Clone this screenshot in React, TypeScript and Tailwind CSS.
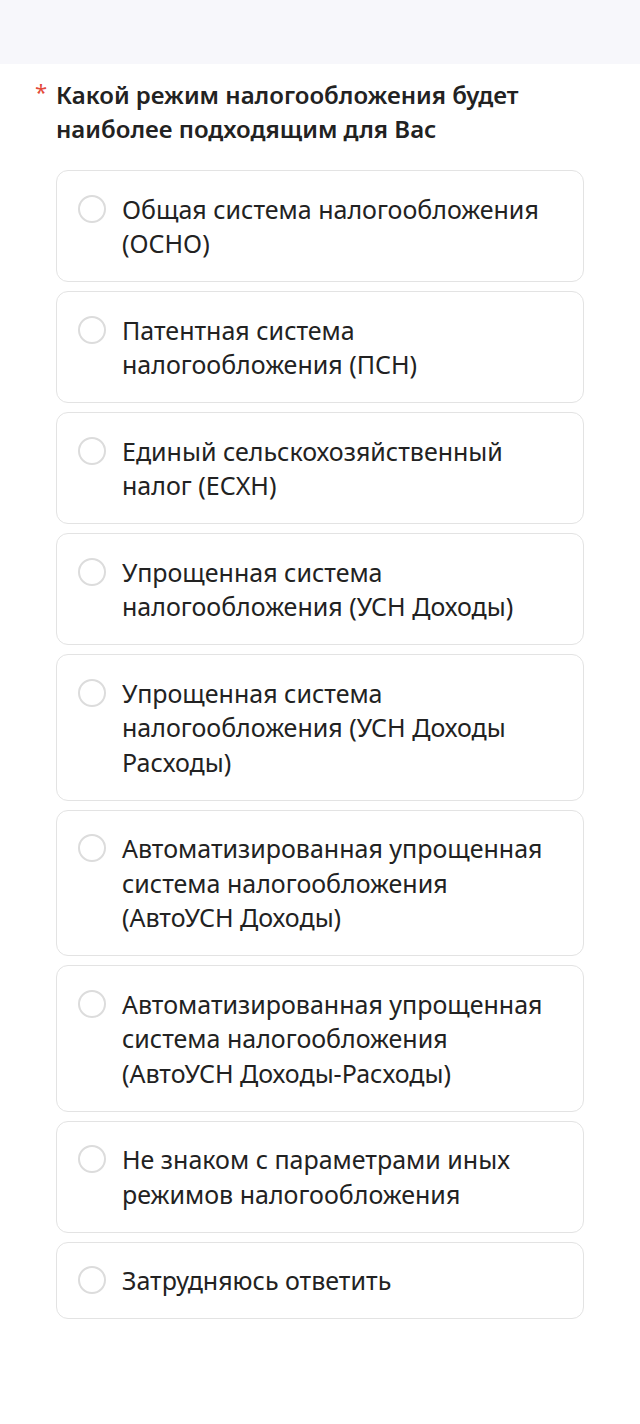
import React from 'react';

// each option is split the same way as in the form
const options: string[][] = [
  ['Общая система налогообложения', '(ОСНО)'],
  ['Патентная система', 'налогообложения (ПСН)'],
  ['Единый сельскохозяйственный', 'налог (ЕСХН)'],
  ['Упрощенная система', 'налогообложения (УСН Доходы)'],
  ['Упрощенная система', 'налогообложения (УСН Доходы', 'Расходы)'],
  ['Автоматизированная упрощенная', 'система налогообложения', '(АвтоУСН Доходы)'],
  ['Автоматизированная упрощенная', 'система налогообложения', '(АвтоУСН Доходы-Расходы)'],
  ['Не знаком с параметрами иных', 'режимов налогообложения'],
  ['Затрудняюсь ответить'],
];

const App: React.FC = () => {
  return (
    <div className="min-h-[1424px] bg-white" style={{ fontFamily: '"Noto Sans", "Open Sans", sans-serif' }}>
      <div className="h-16 bg-[#f7f7fb]" />
      <div className="px-[56px] pt-[14px]">
        <div className="relative">
          <span className="absolute -left-[21px] top-[2px] text-[22px] leading-none text-[#e34a3a]">*</span>
          <h2 className="text-[24px] leading-[34px] font-semibold text-[#222]">
            Какой режим налогообложения будет
            <br />
            наиболее подходящим для Вас
          </h2>
        </div>
        <div className="mt-[24px] flex flex-col gap-[9px]">
          {options.map((lines, i) => (
            <label
              key={i}
              className="flex items-start gap-[16px] rounded-[12px] border border-[#e3e3e3] px-[21px] py-[20.5px]"
            >
              <span className="mt-[3px] h-[28px] w-[28px] shrink-0 rounded-full border-2 border-[#dcdcdc] bg-white" />
              <span className="whitespace-nowrap text-[25px] leading-[34.5px] text-[#222]">
                {lines.map((l, j) => (
                  <React.Fragment key={j}>
                    {j > 0 && <br />}
                    {l}
                  </React.Fragment>
                ))}
              </span>
            </label>
          ))}
        </div>
      </div>
    </div>
  );
};

export default App;
